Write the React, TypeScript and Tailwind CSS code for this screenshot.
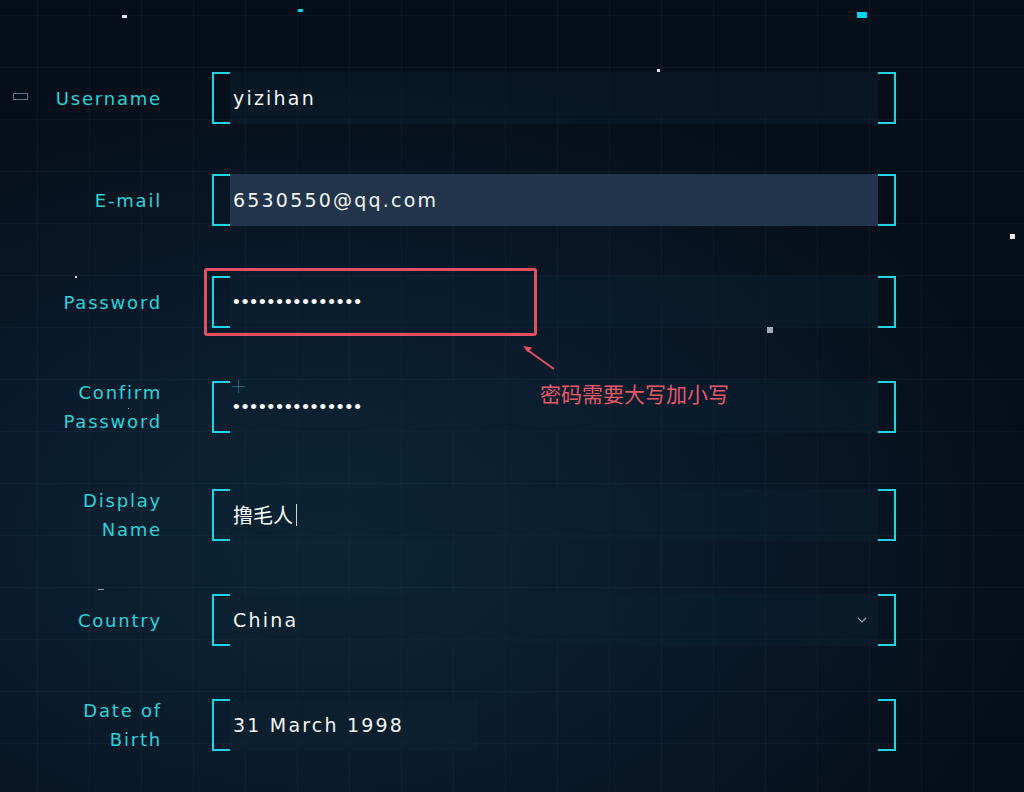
import React from "react";

type Field = {
  label: string[];
  value: string;
  kind?: "email" | "password" | "select" | "date" | "cursor";
};

const fields: Field[] = [
  { label: ["Username"], value: "yizihan" },
  { label: ["E-mail"], value: "6530550@qq.com", kind: "email" },
  { label: ["Password"], value: "•••••••••••••••", kind: "password" },
  { label: ["Confirm", "Password"], value: "•••••••••••••••", kind: "password" },
  { label: ["Display", "Name"], value: "撸毛人", kind: "cursor" },
  { label: ["Country"], value: "China", kind: "select" },
  { label: ["Date of", "Birth"], value: "31 March 1998", kind: "date" },
];

const stars = [
  { c: "left-[122px] top-[15px] w-[5px] h-[3px] bg-white/90" },
  { c: "left-[298px] top-[9px] w-[5px] h-[3px] bg-cyan-400" },
  { c: "left-[857px] top-[12px] w-[10px] h-[6px] bg-cyan-400" },
  { c: "left-[657px] top-[69px] w-[3px] h-[3px] bg-white/90" },
  { c: "left-[1010px] top-[234px] w-[5px] h-[5px] bg-white/90" },
  { c: "left-[75px] top-[276px] w-[2px] h-[2px] bg-white/80" },
  { c: "left-[767px] top-[327px] w-[6px] h-[6px] bg-slate-300/80" },
  { c: "left-[128px] top-[408px] w-[1px] h-[1px] bg-white/60" },
  { c: "left-[98px] top-[589px] w-[6px] h-[1px] bg-slate-300/70" },
  { c: "left-[13px] top-[93px] w-[15px] h-[7px] border border-slate-400/70" },
];

function Bracket({ side }: { side: "left" | "right" }) {
  return (
    <div
      className={
        side === "left"
          ? "h-full w-[18px] shrink-0 border-2 border-r-0 border-[#20d4e4]"
          : "h-full w-[18px] shrink-0 border-2 border-l-0 border-[#20d4e4]"
      }
    />
  );
}

function Value({ f }: { f: Field }) {
  if (f.kind === "password") {
    return (
      <span className="font-['Liberation_Sans',sans-serif] text-[19px] tracking-[2px] text-white">
        {f.value}
      </span>
    );
  }
  if (f.kind === "cursor") {
    return (
      <span className="flex items-center font-['Noto_Sans_CJK_SC',sans-serif] text-[20px] text-white">
        {f.value}
        <span className="ml-[3px] h-[22px] w-px bg-white/80" />
      </span>
    );
  }
  return (
    <span className="font-['DejaVu_Sans',sans-serif] text-[19px] tracking-[2.2px] text-[#f2f4f5]">
      {f.value}
    </span>
  );
}

function Input({ f }: { f: Field }) {
  const bg =
    f.kind === "email"
      ? "bg-[#22344b]"
      : f.kind === "date"
        ? "bg-transparent"
        : "bg-[#0c2231]/45";
  return (
    <div className="flex h-[52px] w-[684px] items-stretch">
      <Bracket side="left" />
      <div className={`flex flex-1 items-center pl-[3px] pr-[6px] ${bg}`}>
        {f.kind === "date" ? (
          <div className="-ml-[3px] flex h-full w-[248px] items-center bg-[#0c2231]/55 pl-[3px]">
            <Value f={f} />
          </div>
        ) : (
          <Value f={f} />
        )}
        {f.kind === "select" && (
          <svg
            className="ml-auto mr-[5px] h-[6px] w-[10px]"
            viewBox="0 0 10 6"
            fill="none"
            stroke="#8fa0ab"
            strokeWidth="1.2"
          >
            <path d="M1 1l4 4 4-4" />
          </svg>
        )}
      </div>
      <Bracket side="right" />
    </div>
  );
}

export default function App() {
  return (
    <div className="relative h-[792px] w-[1024px] overflow-hidden bg-[radial-gradient(ellipse_70%_60%_at_32%_68%,#0c2636_0%,#09192a_55%,#060f19_100%)]">
      <div className="h-full w-full bg-[linear-gradient(to_right,rgba(70,150,170,0.055)_1px,transparent_1px),linear-gradient(to_bottom,rgba(70,150,170,0.055)_1px,transparent_1px)] bg-[size:52px_52px] bg-[position:37px_15px]">
        <div className="flex flex-col gap-[50px] pt-[72px]">
          {fields.map((f, idx) => (
            <div
              key={idx}
              className={`flex items-center gap-[50px] ${f.label.length > 1 ? "h-[58px]" : "h-[52px]"}`}
            >
              <div className="w-[162px] text-right font-['DejaVu_Sans',sans-serif] text-[18px] leading-[29px] tracking-[1.8px] text-[#2ad3d8]">
                {f.label.map((l, i) => (
                  <div key={i}>{l}</div>
                ))}
              </div>
              <Input f={f} />
            </div>
          ))}
        </div>
      </div>

      {stars.map((s, i) => (
        <div key={i} className={`absolute ${s.c}`} />
      ))}
      <svg className="absolute left-[232px] top-[380px]" width="13" height="13" viewBox="0 0 13 13">
        <path d="M6.5 0v13M0 6.5h13" stroke="#2a8f9a" strokeOpacity="0.6" strokeWidth="1" />
      </svg>

      {/* annotation */}
      <div className="absolute left-[204px] top-[268px] h-[68px] w-[333px] rounded-[3px] border-[3px] border-[#e3505f]" />
      <svg className="absolute left-[518px] top-[340px]" width="44" height="34" viewBox="0 0 44 34">
        <path d="M36 29L8 9" stroke="#e3505f" strokeWidth="2" />
        <path d="M5 6l9 1.5-4 5z" fill="#e3505f" />
      </svg>
      <div className="absolute left-[540px] top-[379px] font-['Noto_Sans_CJK_SC',sans-serif] text-[21px] leading-[28px] text-[#e8576a]">
        密码需要大写加小写
      </div>
    </div>
  );
}
